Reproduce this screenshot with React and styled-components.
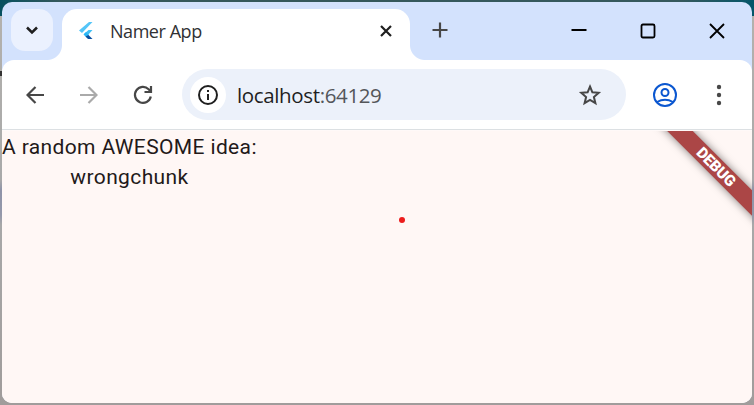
import React from 'react';
import styled, { createGlobalStyle } from 'styled-components';

const Global = createGlobalStyle`
  * { box-sizing: border-box; }
  html, body { margin: 0; padding: 0; overflow: hidden; }
  svg { display: block; flex: none; }
`;

const Desktop = styled.div`
  width: 754px;
  height: 405px;
  padding: 2px;
  background:
    linear-gradient(90deg, #06505f 0, #35585c 60px, #35585c 680px, #04566a 754px) top / 100% 16px no-repeat,
    linear-gradient(#333 0, #333 100%) 0 71px / 2px 5px no-repeat,
    linear-gradient(#b4b2ae 0, #a9a9a9 180px, #8f93a8 190px, #9498aa 215px, #a8a8a8 225px, #a09c9b 100%);
`;

const Window = styled.main`
  display: flex;
  flex-direction: column;
  width: 750px;
  height: 401px;
  border-radius: 10px;
  overflow: hidden;
  background: #d3e2fd;
`;

const TabStrip = styled.header`
  display: flex;
  height: 58px;
  padding: 7px 23px 0 9px;
`;

const TabSearch = styled.button`
  display: grid;
  place-items: center;
  width: 42px;
  height: 42px;
  padding: 0;
  border: 0;
  border-radius: 14px;
  background: #ebf1fe;
`;

const Tab = styled.div`
  position: relative;
  display: flex;
  align-items: center;
  width: 348px;
  height: 51px;
  margin-left: 9px;
  padding: 0 16px 8px 16px;
  border-radius: 15px 15px 0 0;
  background: #fff;

  &::before,
  &::after {
    content: '';
    position: absolute;
    bottom: 0;
    width: 15px;
    height: 15px;
  }
  &::before {
    right: 100%;
    background: radial-gradient(circle at 0 0, transparent 14.5px, #fff 15.5px);
  }
  &::after {
    left: 100%;
    background: radial-gradient(circle at 100% 0, transparent 14.5px, #fff 15.5px);
  }
`;

const TabTitle = styled.span`
  flex: 1;
  margin-left: 14px;
  font: 18px/24px 'Open Sans', 'Noto Sans', sans-serif;
  letter-spacing: -0.45px;
  color: #303134;
`;

const IconButton = styled.button`
  display: grid;
  place-items: center;
  width: ${(p) => p.$w || 24}px;
  height: ${(p) => p.$h || 24}px;
  margin: ${(p) => p.$margin || 0};
  padding: 0;
  border: 0;
  background: none;
  color: ${(p) => p.$color || '#474747'};
`;

const WindowControls = styled.div`
  display: flex;
  gap: 45px;
  margin-left: auto;
  padding-top: 10px;
`;

const Toolbar = styled.nav`
  display: flex;
  align-items: center;
  height: 70px;
  padding: 0 21px;
  border-bottom: 1px solid #dce0e3;
  border-radius: 12px 12px 0 0;
  background: #fff;
`;

const AddressBar = styled.div`
  display: flex;
  align-items: center;
  width: 444px;
  height: 51px;
  margin-left: 27px;
  padding: 0 24px 0 8px;
  border-radius: 26px;
  background: #ecf1fa;
  color: #474747;
`;

const SiteInfo = styled.button`
  display: grid;
  place-items: center;
  width: 36px;
  height: 36px;
  padding: 0;
  border: 0;
  border-radius: 50%;
  background: #fff;
`;

const Url = styled.span`
  flex: 1;
  margin-left: 11px;
  font: 20.5px/28px 'Open Sans', 'Noto Sans', sans-serif;
  letter-spacing: -0.36px;
  color: #1f1f1f;
`;

const Port = styled.span`
  color: #54565a;
`;

const Page = styled.section`
  position: relative;
  flex: 1;
  margin-top: 1px;
  overflow: hidden;
  background: #fff7f5;
`;

const PageWrap = styled.div`
  display: flex;
  flex: 1;
  flex-direction: column;
  background: #fff9f8;
`;

const Column = styled.div`
  display: flex;
  flex-direction: column;
  align-items: center;
  width: max-content;
  padding-top: 1px;
`;

const BodyText = styled.span`
  font: 400 21px/30px Roboto, sans-serif;
  letter-spacing: 0.375px;
  color: #231919;
`;

const DebugBanner = styled.div`
  position: absolute;
  top: 27px;
  right: -64px;
  width: 200px;
  height: 18px;
  transform: rotate(45deg);
  background: #ab4646;
  box-shadow: 0 0 9px rgba(0, 0, 0, 0.5);
  color: #fff;
  font: 900 15.3px/18px Roboto, sans-serif;
  letter-spacing: -0.2px;
  text-align: center;
`;

const Pointer = styled.i`
  position: absolute;
  left: 397px;
  top: 86px;
  width: 6px;
  height: 6px;
  border-radius: 50%;
  background: #ec1c1c;
`;

function Line({ w, h = w, d, sw = 2, ...rest }) {
  return (
    <svg width={w} height={h} viewBox={`0 0 ${w} ${h}`} fill="none" stroke="currentColor" strokeWidth={sw} {...rest}>
      <path d={d} />
    </svg>
  );
}

function FlutterLogo() {
  return (
    <svg width="18" height="20" viewBox="0 0 18 20">
      <path d="M11 1h3.500L4 12l-3-2.500z" fill="#54c5f8" />
      <path d="M10.500 9h4L10 14l-4-1z" fill="#40c0f5" />
      <path d="M5.500 13.500L8 11l3 3-2.500 2.500z" fill="#29b6f6" />
      <path d="M7.500 15.500L10.500 14l4 4h-4.500z" fill="#0a4fa0" />
    </svg>
  );
}

export default function App() {
  return (
    <>
      <Global />
      <Desktop>
        <Window>
          <TabStrip>
            <TabSearch aria-label="Search tabs">
              <Line w={14} d="M2 4.5l5 5 5-5" sw={2.5} color="#1f1f1f" />
            </TabSearch>
            <Tab>
              <FlutterLogo />
              <TabTitle>Namer App</TabTitle>
              <IconButton $w={16} $h={16} $color="#1f1f1f" aria-label="Close tab">
                <Line w={12} d="M1 1l10 10M11 1L1 11" sw={2.2} />
              </IconButton>
            </Tab>
            <IconButton $margin="9px 0 0 18px" aria-label="New tab">
              <Line w={16} d="M8 .5v15M.5 8h15" sw={2.2} />
            </IconButton>
            <WindowControls>
              <IconButton $color="#000" aria-label="Minimize">
                <Line w={16} d="M.5 7h15" />
              </IconButton>
              <IconButton $color="#000" aria-label="Maximize">
                <Line w={16} d="M3 1.5h10q1.5 0 1.5 1.5v10q0 1.5-1.5 1.5H3q-1.5 0-1.5-1.5V3q0-1.5 1.5-1.5z" sw={1.8} />
              </IconButton>
              <IconButton $color="#000" aria-label="Close">
                <Line w={16} d="M1 1l14 14M15 1L1 15" sw={1.8} />
              </IconButton>
            </WindowControls>
          </TabStrip>
          <Toolbar>
            <IconButton aria-label="Back">
              <Line w={18} d="M18 9H2M9.5 1L1.5 9l8 8" sw={2.2} />
            </IconButton>
            <IconButton $margin="0 0 0 30px" $color="#aaa" aria-label="Forward">
              <Line w={18} d="M0 9h16M8.500 1l8 8-8 8" sw={2.2} />
            </IconButton>
            <IconButton $margin="0 0 0 30px" aria-label="Reload">
              <Line w={20} d="M17.800 11.500A8 8 0 1 1 15.600 4.200L18 6.700M18 1v6h-6.500" sw={2.2} />
            </IconButton>
            <AddressBar>
              <SiteInfo aria-label="Site information">
                <svg width="20" height="20" viewBox="0 0 20 20" fill="none" stroke="#1f1f1f" strokeWidth="2">
                  <circle cx="10" cy="10" r="9" />
                  <path d="M10 9v6M10 5v2" />
                </svg>
              </SiteInfo>
              <Url>localhost<Port>:64129</Port></Url>
              <Line w={24} d="M12 3.500l2.400 5.800 6.300.5-4.800 4.200 1.500 6.200-5.400-3.300-5.400 3.300 1.500-6.200-4.800-4.200 6.300-.5z" />
            </AddressBar>
            <IconButton $margin="0 0 0 27px" $color="#0b57d0" aria-label="Profile">
              <svg width="24" height="24" viewBox="0 0 24 24" fill="none" stroke="currentColor" strokeWidth="2">
                <circle cx="12" cy="12" r="11" />
                <circle cx="12" cy="9.500" r="3.500" />
                <path d="M4 19q8-4.500 16 0" />
              </svg>
            </IconButton>
            <IconButton $margin="0 0 0 30px" aria-label="Menu">
              <svg width="6" height="22" viewBox="0 0 6 22" fill="currentColor">
                <circle cx="3" cy="3" r="2.200" />
                <circle cx="3" cy="11" r="2.200" />
                <circle cx="3" cy="19" r="2.200" />
              </svg>
            </IconButton>
          </Toolbar>
          <PageWrap>
            <Page>
              <Column>
                <BodyText>A random AWESOME idea:</BodyText>
                <BodyText>wrongchunk</BodyText>
              </Column>
              <DebugBanner>DEBUG</DebugBanner>
              <Pointer />
            </Page>
          </PageWrap>
        </Window>
      </Desktop>
    </>
  );
}
